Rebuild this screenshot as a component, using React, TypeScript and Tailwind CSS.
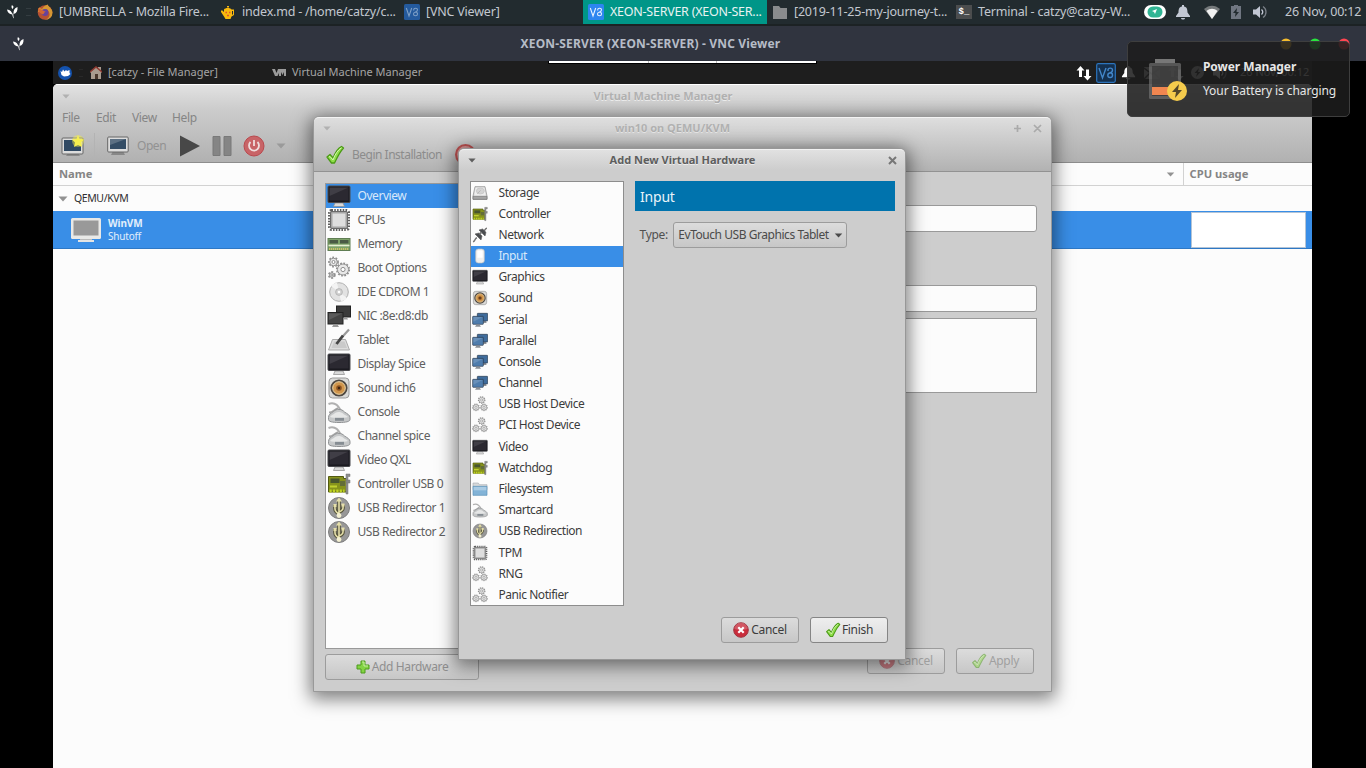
import React from "react";

type IconProps = { name: string; size: number };

function Monitor({ fill }: { fill: string }) {
  return (
    <g>
      <path d="M8 19h8l1.5 3.5h-11z" fill="#d9d9d9" stroke="#8b8b8b" strokeWidth=".7" />
      <rect x="1" y="2" width="22" height="16.5" rx="1" fill="#1b1a20" stroke="#4a4a4e" />
      <rect x="2.5" y="3.5" width="19" height="13" fill={fill} />
      <path d="M2.5 3.5h19L2.5 12z" fill="#fff" opacity=".1" />
    </g>
  );
}

function Gear({ cx, cy, r }: { cx: number; cy: number; r: number }) {
  return (
    <g fill="none">
      <circle cx={cx} cy={cy} r={r} stroke="#8e8e8e" strokeWidth="2.2" strokeDasharray="1.7 1.4" />
      <circle cx={cx} cy={cy} r={r - 0.5} fill="#e8e8e8" stroke="#949494" strokeWidth="1" />
      <circle cx={cx} cy={cy} r={r * 0.35} fill="#fff" stroke="#8f8f8f" strokeWidth="1" />
    </g>
  );
}

function DeviceIcon({ name, size }: IconProps) {
  const art: Record<string, React.ReactNode> = {
    monitor: <Monitor fill="#2b2931" />,
    cpu: (
      <g>
        <rect x="2.5" y="2.5" width="19" height="19" rx="2" fill="none" stroke="#5e5e5e" strokeWidth="3" strokeDasharray="1.5 1.3" />
        <rect x="3.5" y="3.5" width="17" height="17" rx="1.5" fill="#a5a5a5" stroke="#6a6a6a" />
        <rect x="5.500" y="5.500" width="13" height="13" fill="#dedede" />
      </g>
    ),
    memory: (
      <g>
        <rect x="1" y="6.500" width="22" height="12" fill="#7da269" stroke="#5f7d53" />
        <rect x="2.500" y="8" width="8.500" height="3.500" fill="#4a5a45" />
        <rect x="13" y="8" width="8.500" height="3.500" fill="#4a5a45" />
        <path d="M1.500 13.500h21" stroke="#e6eed2" strokeWidth="1.600" />
        <path d="M2 17h20" stroke="#c9c168" strokeWidth="2" strokeDasharray="1.200 .8" />
      </g>
    ),
    boot: (
      <g>
        <Gear cx={6.5} cy={6} r={4.3} />
        <Gear cx={16} cy={13.5} r={6} />
        <Gear cx={4.8} cy={19} r={2.8} />
      </g>
    ),
    gears: (
      <g>
        <Gear cx={14.5} cy={6} r={4.6} />
        <Gear cx={6} cy={17} r={4.6} />
        <Gear cx={18} cy={17} r={4.6} />
      </g>
    ),
    disc: (
      <g>
        <circle cx="12" cy="12" r="9.300" fill="#e2e2e2" stroke="#b0b0b0" />
        <path d="M12 12L4 6a10 10 0 0 1 6-3.600zM12 12l8 6a10 10 0 0 1-6 3.600z" fill="#f3f3f3" />
        <circle cx="12" cy="12" r="3.400" fill="#d0d0d0" stroke="#aaa" strokeWidth=".7" />
        <circle cx="12" cy="12" r="1.300" fill="#fff" />
      </g>
    ),
    nic: (
      <g>
        <rect x="9.500" y="2" width="14" height="11" fill="#3a3a3a" stroke="#222" />
        <path d="M17 15.500h4l-1-2h-3z" fill="#999" />
        <rect x="1" y="8.500" width="15" height="11.500" fill="#444" stroke="#222" />
        <path d="M2 9.500h13L2 16z" fill="#fff" opacity=".12" />
        <path d="M5 23h7l-1.500-2.500h-4z" fill="#999" />
      </g>
    ),
    netblue: (
      <g>
        <path d="M16 16.500h6l-1.500-3h-3z" fill="#8b9096" />
        <rect x="8" y="2" width="15.500" height="11.500" rx=".7" fill="#3f6c9c" stroke="#27384b" />
        <rect x="1" y="6.500" width="16" height="12" rx=".7" fill="#4f7dad" stroke="#27384b" />
        <path d="M2 7.500h14L2 14.500z" fill="#fff" opacity=".15" />
        <path d="M4.500 22h9l-2-3h-5z" fill="#8b9096" />
      </g>
    ),
    tablet: (
      <g>
        <path d="M5.500 11.500h13l4 10.500h-21z" fill="#ddd" stroke="#ababab" />
        <path d="M7 13.500h10.500l2.500 6.500H4.500z" fill="#cacaca" />
        <path d="M22 1.500L12 12.500" stroke="#9a9a9a" strokeWidth="2.200" />
        <path d="M16 7.500L9.500 16" stroke="#444" strokeWidth="2.800" />
      </g>
    ),
    speaker: (
      <g>
        <rect x="2" y="2" width="20" height="20" rx="3.500" fill="#d9d9d7" stroke="#999" />
        <circle cx="12" cy="12" r="8.600" fill="#4e4740" />
        <circle cx="12" cy="12" r="6.300" fill="#d0954b" stroke="#efd7a8" />
        <circle cx="12" cy="12" r="2.800" fill="#8c5221" />
        <circle cx="12" cy="12" r="1.200" fill="#3b2311" />
      </g>
    ),
    serial: (
      <g fill="none">
        <path d="M1.500 4c5-2 9 0 12 6" stroke="#b0b0b0" strokeWidth="2" />
        <path d="M2 12.500c4 0 5-3 9-4.500" stroke="#a6a6a6" strokeWidth="1.800" />
        <path d="M1.500 17.500c0-3 2-4 5-6 3-3 8-3 11 .5 3 2 5.500 3 5.500 5.500v2c0 2-4 3-11 3s-10.500-1-10.500-3z" fill="#c6c8c9" stroke="#8f9193" />
        <path d="M3 17c1-2 4-2.500 5-4 3-1.500 6-1 8 .5 1 1.500 4 2 5 3.500-4 1.500-14 1.500-18 0z" fill="#e6e7e7" />
        <path d="M8 17.800h9v3H8z" fill="#868d93" />
      </g>
    ),
    card: (
      <g>
        <path d="M1.500 4.500h15v2h3v13.500h-18z" fill="#87931c" stroke="#525a12" />
        <rect x="3.500" y="6.500" width="9" height="4.500" fill="#48552e" />
        <rect x="13" y="9" width="5" height="5" fill="#636d38" />
        <path d="M3 14.500h7" stroke="#c0d02f" strokeWidth="2" />
        <path d="M2.500 19h15" stroke="#bfd322" strokeWidth="3" strokeDasharray="2.200 1.200" />
        <path d="M19 2h4v2.500h-2V22h-2zM19 8h4v3h-4z" fill="#8e8e8e" stroke="#777" strokeWidth=".5" />
      </g>
    ),
    usb: (
      <g fill="none">
        <circle cx="12" cy="12" r="10.500" fill="#979797" stroke="#7d7d7d" />
        <path d="M12 21V4M12 18c-5-3-4-5-4-9M12 16c5-2 4-4 4-7" stroke="#55533b" strokeWidth="3.600" />
        <path d="M12 21V4M12 18c-5-3-4-5-4-9M12 16c5-2 4-4 4-7" stroke="#e5dfaa" strokeWidth="1.600" />
        <circle cx="12" cy="19.500" r="2.400" fill="#f4f0d1" />
        <path d="M9 5.500l3-4 3 4z" fill="#e5dfaa" />
        <path d="M6.500 8h3v3h-3zM14.500 7.500h3v3h-3z" fill="#e5dfaa" />
      </g>
    ),
    storage: (
      <g>
        <path d="M4.500 2.500h15l3 14v5h-21v-5z" fill="#dcdcdc" stroke="#858585" />
        <path d="M5.500 4h13l2 12h-17z" fill="#eee" />
        <ellipse cx="12.500" cy="9" rx="6" ry="4.500" fill="#d4d4d4" stroke="#c1c1c1" />
        <path d="M1.500 17h21v4.500h-21z" fill="#a5a5a5" stroke="#777" />
        <path d="M8 13l5-5" stroke="#aaa" />
      </g>
    ),
    plug: (
      <g fill="none">
        <path d="M1.500 22c4-.5 2-5 6-6M22.500 2c-3.500 0-2 3.500-6 5" stroke="#777" strokeWidth="2.200" />
        <path d="M4.500 10.500l9 9 1.500-6-4.500-4.500zM10.500 4.500l9 9 1.500-5.500-5-5z" fill="#4a4c4f" stroke="#5f5f5f" />
        <path d="M11 11l3-3" stroke="#777" strokeWidth="3" />
      </g>
    ),
    mouse: (
      <g>
        <rect x="5.500" y="1.500" width="13" height="21" rx="4" fill="#f0f0ee" stroke="#bdbdbd" />
        <path d="M8 4.500c2-1 6-1 8 0v10H8z" fill="#fff" />
      </g>
    ),
    folder: (
      <g>
        <path d="M1.500 3h8l1.500 2.500h11.500V13h-21z" fill="#d7d9da" stroke="#aab1b5" />
        <path d="M1.500 8h21v13.500h-21z" fill="#82b3d7" stroke="#5b93b8" />
        <path d="M2.500 9h19v5h-19z" fill="#a9cbe4" />
      </g>
    ),
  };
  return (
    <svg width={size} height={size} viewBox="0 0 24 24" className="shrink-0">
      {art[name]}
    </svg>
  );
}

const Check = ({ size, faded = false }: { size: number; faded?: boolean }) => (
  <svg width={size} height={size} viewBox="0 0 20 20" className={faded ? "shrink-0 opacity-50" : "shrink-0"}>
    <path d="M2 12l3-2.500 3 3.500C10 8 13 3 16.500 1.500l2 1.500C14 8 12 13 9.500 18H6.500z" fill="#8fdf4a" stroke="#4b9a16" strokeWidth="1.300" strokeLinejoin="round" />
    <path d="M4 12l1-.5 3 3.500C10 9 13 5 16.500 2.800" fill="none" stroke="#d5f7b2" strokeWidth="1" />
  </svg>
);

const CancelIcon = ({ faded = false }: { faded?: boolean }) => (
  <svg width="16" height="16" viewBox="0 0 16 16" className={faded ? "shrink-0 opacity-50" : "shrink-0"}>
    <circle cx="8" cy="8" r="7.300" fill="#c92d3c" stroke="#a03440" />
    <path d="M1.500 7a6.500 6.500 0 0 1 13 0c-4 1.500-9 1.500-13 0z" fill="#fff" opacity=".2" />
    <path d="M5.300 5.300l5.400 5.400M10.700 5.300l-5.400 5.400" stroke="#fff" strokeWidth="2.200" />
  </svg>
);

const Vnc = ({ dim = false }: { dim?: boolean }) => (
  <svg width="16" height="16" viewBox="0 0 16 16" className="shrink-0">
    <rect width="16" height="16" rx="1.500" fill={dim ? "#245a9d" : "#2d86f0"} />
    <path d="M2.300 4l2.700 8 2.700-8M9.700 6.500V5.800c0-2 3.800-2 3.800 0 0 1.500-1 2-2 2.200-1.300.3-2 1-2 2 0 2.300 4 2.300 4 0 0-1.200-.8-2-2-2" fill="none" stroke={dim ? "#7d9fc6" : "#e6f1ff"} strokeWidth="1.100" />
  </svg>
);

const Bird = () => (
  <svg width="11" height="14" viewBox="0 0 11 14" className="shrink-0">
    <path d="M0 4.500c3 .3 5 1.800 5.300 5C2.300 9 .5 7.500 0 4.500zM10.500 2c.3 4-1 6.500-4 7-.2-3.500 1-6 4-7z" fill="#fff" />
    <path d="M5 0l1.600 1.800L5.800 4C4.300 3 4.200 1.500 5 0zM5.300 8.500h1c0 2 .2 3.500.7 5C5.800 12.500 5.300 11 5.300 8.500z" fill="#fff" />
  </svg>
);

const Caret = ({ className }: { className: string }) => (
  <svg width="10" height="6" viewBox="0 0 10 6" className={className}>
    <path d="M.5.5h9L5 5.500z" fill="currentColor" />
  </svg>
);

const Bell = ({ size }: { size: number }) => (
  <svg width={size} height={size} viewBox="0 0 16 16" className="shrink-0" fill="currentColor">
    <path d="M7 1h2v1.500c3 .6 3.500 3 3.500 6L15 12v1H1v-1l2.500-3.500c0-3 .5-5.400 3.500-6zM6 14h4c0 2-4 2-4 0z" />
  </svg>
);

const Arrows = () => (
  <svg width="16" height="16" viewBox="0 0 16 16" className="shrink-0" fill="currentColor">
    <path d="M4.500 1L8.500 5.500H6V12H3V5.500H.5zM11.500 15.500L7.500 11H10V4.500h3V11h2.500z" />
  </svg>
);

const Speaker = () => (
  <svg width="16" height="16" viewBox="0 0 16 16" className="shrink-0">
    <path d="M1 5.500h3L8 2v12L4 10.500H1z" fill="currentColor" />
    <path d="M9.500 5.500c1.500 1.500 1.500 3.500 0 5" fill="none" stroke="currentColor" strokeWidth="1.300" />
    <path d="M11 2.500c4 2.500 4 8.500 0 11" fill="none" stroke="#7b8189" strokeWidth="1.300" />
  </svg>
);

const hardware: [string, string][] = [
  ["Overview", "monitor"], ["CPUs", "cpu"], ["Memory", "memory"], ["Boot Options", "boot"],
  ["IDE CDROM 1", "disc"], ["NIC :8e:d8:db", "nic"], ["Tablet", "tablet"], ["Display Spice", "monitor"],
  ["Sound ich6", "speaker"], ["Console", "serial"], ["Channel spice", "serial"], ["Video QXL", "monitor"],
  ["Controller USB 0", "card"], ["USB Redirector 1", "usb"], ["USB Redirector 2", "usb"],
];

const newHardware: [string, string][] = [
  ["Storage", "storage"], ["Controller", "card"], ["Network", "plug"], ["Input", "mouse"],
  ["Graphics", "monitor"], ["Sound", "speaker"], ["Serial", "netblue"], ["Parallel", "netblue"],
  ["Console", "netblue"], ["Channel", "netblue"], ["USB Host Device", "gears"], ["PCI Host Device", "gears"],
  ["Video", "monitor"], ["Watchdog", "card"], ["Filesystem", "folder"], ["Smartcard", "serial"],
  ["USB Redirection", "usb"], ["TPM", "cpu"], ["RNG", "gears"], ["Panic Notifier", "gears"],
];

function TopPanel() {
  return (
    <header className="flex h-[26px] items-center border-b-2 border-[#1c2224] bg-[#222b2f] text-[12.500px] leading-6 tracking-[-0.200px] text-[#c3c8cf]">
      <div className="flex w-[37px] shrink-0 items-center pl-[7px]">
        <Bird />
        <span className="ml-[8px] h-[8px] w-[5px] border-y border-[#343d41]" />
      </div>
      <div className="flex w-[184px] shrink-0 items-center gap-[6px]">
        <svg width="16" height="16" viewBox="0 0 16 16" className="shrink-0">
          <circle cx="8" cy="8.500" r="7.300" fill="#b65132" />
          <path d="M2 3.500L5 5c2-3 4-4 6-4.500-.5 2 4 3 4.500 8A7.300 7.300 0 0 1 8 16C15 13 13 7 9 5L7 8 1 8z" fill="#d59733" />
          <circle cx="8" cy="8.500" r="3.400" fill="#67439b" />
          <path d="M1 4l4 2 4 2c-3 0-1 3-4 2S1 7 1 4z" fill="#d36633" />
        </svg>
        <span className="whitespace-nowrap">[UMBRELLA - Mozilla Fire...</span>
      </div>
      <div className="flex w-[183px] shrink-0 items-center gap-[8px]">
        <svg width="13" height="13" viewBox="0 0 13 13" className="shrink-0">
          <path d="M6 0h2v1.500h-2z" fill="#f5b913" />
          <path d="M3 3.500C4 1.500 9.500 1.500 10.500 3.500H13V9l-2.500 1.500-1 2.500h-5L3 10.500 0 6V4.500h1.500L3 6z" fill="#f9b90d" />
          <path d="M11 5h1v3.500h-1z" fill="#222b2f" />
          <path d="M4.500 6.500H6M8 6.500h1.500M6 9.500h2" stroke="#df5330" strokeWidth="1.300" />
        </svg>
        <span className="whitespace-nowrap">index.md - /home/catzy/c...</span>
      </div>
      <div className="flex w-[179px] shrink-0 items-center gap-[6px]"><Vnc dim /><span>[VNC Viewer]</span></div>
      <div className="flex h-6 w-[184px] shrink-0 items-center gap-[6px] bg-[#009688] pl-[5px] text-[#e9f3f2]">
        <Vnc /><span className="whitespace-nowrap tracking-[-0.250px]">XEON-SERVER (XEON-SER...</span>
      </div>
      <div className="flex w-[189px] shrink-0 items-center gap-[7px] pl-[6px]">
        <svg width="14" height="13" viewBox="0 0 14 13" className="shrink-0"><path d="M0 0h6l1.500 2H14v11H0z" fill="#898b8d" /></svg>
        <span className="whitespace-nowrap">[2019-11-25-my-journey-t...</span>
      </div>
      <div className="flex w-[188px] shrink-0 items-center gap-[6px]">
        <span className="flex h-[14px] w-4 shrink-0 items-center justify-center bg-[#4b4d4e] font-mono text-[9px] font-bold tracking-normal text-white">$_</span>
        <span className="whitespace-nowrap">Terminal - catzy@catzy-W...</span>
      </div>
      <div className="flex w-[141px] shrink-0 items-center text-[#c3c8d4]">
        <svg width="22" height="14" viewBox="0 0 22 14" className="mr-[9px]">
          <rect width="22" height="14" rx="7" fill="#fff" />
          <rect x="3.500" y="1.500" width="15" height="11" rx="5.500" fill="#30b594" />
          <path d="M8 6l5-2-2 5-1-2z" fill="#fff" />
        </svg>
        <Bell size={16} />
        <svg width="16" height="14" viewBox="0 0 16 14" className="ml-[13px]">
          <path d="M0 4C5-.5 11-.5 16 4L8 14z" fill="#767a7c" />
          <path d="M2.500 6c3.500-3 7.500-3 11 0L8 14z" fill="#f1f1f1" />
        </svg>
        <svg width="10" height="14" viewBox="0 0 10 14" className="ml-[11px]">
          <path d="M3 0h4v1h3v13H0V1h3z" fill="#707681" /><path d="M6 3L2 8h2.500L4 12l4-5H5.500z" fill="#222b2f" />
        </svg>
        <span className="ml-[11px]"><Speaker /></span>
      </div>
      <span className="whitespace-nowrap">26 Nov, 00:12</span>
    </header>
  );
}

function RemotePanel() {
  return (
    <div className="flex h-[23px] items-center bg-[#1e1e1e] text-[11px] text-[#a5a5a5]">
      <div className="flex w-[36px] items-center pl-[5px]">
        <svg width="14" height="14" viewBox="0 0 14 14"><circle cx="7" cy="7" r="7" fill="#1452ad" /><path d="M2.500 5l1.500 1 1-2.500 1.500 2L8 4l1 1 2.500-1v3l1 1-2.500 2-4 .5L3.500 9z" fill="#fff" /></svg>
        <span className="ml-[7px] h-2 w-[4px] border-y border-[#292929]" />
      </div>
      <svg width="12" height="13" viewBox="0 0 12 13" className="ml-px"><path d="M0 6l6-5 2 1.500V1h3v4l1 1-1 1v6H1V7z" fill="#a99b8e" /><path d="M0 6l6-5 6 5" fill="none" stroke="#8f3930" strokeWidth="1.500" /><path d="M5 8h3v5H5z" fill="#49372c" /></svg>
      <span className="ml-[6px] w-[164px] whitespace-nowrap">[catzy - File Manager]</span>
      <svg width="14" height="7" viewBox="0 0 14 7"><path d="M0 0h3l1.500 4L6 0h8v7h-2V3l-1.500 3L9 3v4H7V4L5.500 7H3z" fill="#9b9b9b" /></svg>
      <span className="ml-[6px] w-[784px] shrink-0 whitespace-nowrap">Virtual Machine Manager</span>
      <div className="flex items-center text-white">
        <Arrows />
        <svg width="20" height="20" viewBox="0 0 20 20" className="ml-[4px] shrink-0"><rect x=".7" y=".7" width="18.600" height="18.600" rx="1.500" fill="#14304f" stroke="#2c74bd" strokeWidth="1.200" /><path d="M3 5l3.500 10L10 5M12 8V7c0-2.500 4.500-2.500 4.500 0 0 1.800-1 2.500-2.200 2.700-1.500.3-2.500 1-2.500 2.500 0 3 4.700 3 4.700 0 0-1.500-1-2.500-2.200-2.500" fill="none" stroke="#4386c9" strokeWidth="1.400" /></svg>
        <span className="ml-[5px]"><Bell size={15} /></span>
        <svg width="16" height="12" viewBox="0 0 16 12" className="ml-2 shrink-0"><path d="M0 0h16v12H0z" fill="#bbb" /><path d="M0 1l8 6 8-6M0 12l6-6M16 12l-6-6" fill="none" stroke="#222" strokeWidth="1.500" /></svg>
        <span className="ml-2"><Arrows /></span>
        <svg width="13" height="13" viewBox="0 0 13 13" className="ml-[7px] shrink-0"><circle cx="6.500" cy="6.500" r="6.500" fill="#bbb" /><path d="M8 2L3.500 7H6l-1 4 4.500-5H7z" fill="#222" /></svg>
        <span className="ml-2"><Speaker /></span>
        <span className="ml-[12px] whitespace-nowrap text-[11px] text-[#ccc]">26 Nov, 00:12</span>
      </div>
    </div>
  );
}

function ManagerWindow() {
  return (
    <section className="flex h-[684px] flex-col overflow-hidden rounded-t-[5px] bg-[#fcfcfc]">
      <div className="flex h-[79px] shrink-0 flex-col border-t border-b border-t-white border-b-[#8d8d8d] bg-linear-to-b from-[#e2e2e2] via-[#cdcdcd] via-30% to-[#b1b1b1] text-[#858585]">
        <div className="flex h-[23px] shrink-0 items-center pl-[9px] text-[#b1b1b1]">
          <Caret className="h-[5px] w-[8px]" />
          <b className="w-[1186px] text-center text-[11px] [text-shadow:0_1px_0_#eee]">Virtual Machine Manager</b>
        </div>
        <nav className="flex h-[19px] shrink-0 items-center pl-[9px] text-[12px] tracking-[-0.350px]">
          <span className="w-[34px]">File</span><span className="w-[36px]">Edit</span><span className="w-[40px]">View</span><span>Help</span>
        </nav>
        <div className="flex h-[36px] shrink-0 items-center pt-px pl-[8px]">
          <svg width="24" height="22" viewBox="0 0 24 22"><path d="M7 18h10l2 3H5z" fill="#898989" /><rect x="1" y="3" width="21" height="16" rx="1" fill="#dcdcdc" stroke="#666" /><rect x="3" y="5" width="17" height="11" fill="#304963" /><circle cx="17" cy="6" r="6" fill="#f3ee4a" opacity=".45" /><path d="M17 0l1.500 4 4.500.5-3 3 1 4.500-4-2-4 2 1-4.500-3-3 4.500-.5z" fill="#f6ef4f" /></svg>
          <span className="ml-[9px] h-[26px] w-px bg-[#b3b3b3]" />
          <svg width="22" height="20" viewBox="0 0 22 20" className="ml-[12px]"><path d="M6 15h10l2 4H4z" fill="#888" /><rect x=".7" y="1" width="20.500" height="15" rx="1" fill="#ddd" stroke="#666" /><rect x="3" y="3" width="16" height="10" fill="#344d65" /><path d="M3 3h16L3 9z" fill="#fff" opacity=".2" /></svg>
          <span className="ml-[8px] w-[43px] text-[12px] tracking-[-0.450px] text-[#929292]">Open</span>
          <svg width="20" height="22" viewBox="0 0 20 22"><path d="M0 .5L20 11 0 21.500z" fill="#484848" /></svg>
          <svg width="20" height="20" viewBox="0 0 20 20" className="ml-[12px]"><path d="M1 .5h7v19H1zM12 .5h7v19h-7z" fill="#858585" stroke="#797979" /></svg>
          <svg width="22" height="22" viewBox="0 0 22 22" className="ml-[11px]"><circle cx="11" cy="11" r="10" fill="#c86467" stroke="#b9494e" /><path d="M7.500 7a5 5 0 1 0 7 0M11 5v6" fill="none" stroke="#efdddd" strokeWidth="1.800" /></svg>
          <Caret className="ml-[11px] text-[#9a9a9a]" />
        </div>
      </div>
      <div className="flex h-[23px] shrink-0 items-center border-b border-[#d2d2d2] text-[11.200px] font-bold text-[#858585]">
        <span className="w-[1113px] pl-[6px]">Name</span>
        <Caret className="h-[5px] w-[9px] text-[#929292]" />
        <span className="ml-[8px] flex h-full items-center border-l border-[#d2d2d2] pl-[5.500px]">CPU usage</span>
      </div>
      <div className="flex h-[25px] shrink-0 items-center pl-[5px] text-[10.500px] tracking-[-0.400px] text-[#303030]">
        <Caret className="mr-[6px] text-[#929292]" />QEMU/KVM
      </div>
      <div className="flex h-[38px] shrink-0 items-center border-b border-[#2e78c5] bg-[#398ee7] pl-[17px] text-[#e2eefb]">
        <svg width="32" height="28" viewBox="0 0 32 28"><path d="M10 22h12v3H10z" fill="#bbb" /><rect x="1" y="2" width="30" height="21" rx="1.500" fill="#e9e9e7" /><rect x="3.500" y="4.500" width="25" height="15" fill="#999" /><path d="M8 24h16v2H8z" fill="#e4e4e4" /></svg>
        <div className="ml-[6px] w-[1083px] text-[10px] leading-[13px] tracking-[-0.200px]"><b className="block tracking-[-0.100px]">WinVM</b><div>Shutoff</div></div>
        <div className="h-9 w-[115px] border border-[#b3c4d6] bg-white" />
      </div>
    </section>
  );
}

const buttonClass = "flex h-[26px] items-center justify-center rounded-[3px] border border-[#9c9c9c] bg-linear-to-b from-[#dcdcdc] to-[#c7c7c7] text-[12px]";

function DetailsWindow() {
  return (
    <section className="absolute left-[313px] top-[116px] flex h-[576px] w-[739px] flex-col rounded-t-[6px] border border-[#999] bg-[#cdcdcd] tracking-[-0.450px] text-[#858585] shadow-[0_4px_18px_3px_rgba(0,0,0,0.5)]">
      <div className="flex h-[55px] shrink-0 flex-col rounded-t-[5px] border-t border-b border-t-[#f4f4f4] border-b-[#929292] bg-linear-to-b from-[#dedede] to-[#b2b2b2]">
        <div className="flex h-[21px] shrink-0 items-center pl-[9px] text-[#b1b1b1]">
          <Caret className="h-[5px] w-[8px]" />
          <b className="w-[683px] text-center text-[11px] tracking-normal [text-shadow:0_1px_0_#e9e9e9]">win10 on QEMU/KVM</b>
          <svg width="29" height="9" viewBox="0 0 29 9" fill="none" stroke="#aaa" strokeWidth="1.700"><path d="M3.500 1v7M0 4.500h7M20 1l7 7M27 1l-7 7" /></svg>
        </div>
        <div className="flex h-[31px] shrink-0 items-center pl-[11px] text-[12px] tracking-[-0.500px] text-[#8c8c8c]">
          <Check size={20} /><span className="ml-[7px] w-[103px] whitespace-nowrap">Begin Installation</span>
          <span className="h-[21px] w-[21px] rounded-full border-2 border-[#c15353] bg-[#db9a9a]" />
        </div>
      </div>
      <div className="flex grow pt-[11px] pl-[11px]">
        <div className="flex w-[154px] flex-col">
          <div className="h-[466px] border border-[#999] bg-[#fcfcfc] text-[12px] text-[#606060]">
            {hardware.map(([label, icon], i) => (
              <div key={i} className={i === 0 ? "flex h-[23.970px] items-center bg-[#398ee7] pl-[1px] text-[#d8e8fa]" : "flex h-[23.970px] items-center pl-[1px]"}>
                <DeviceIcon name={icon} size={24} /><span className="ml-[6.500px] whitespace-nowrap">{label}</span>
              </div>
            ))}
          </div>
          <div className={`${buttonClass} mt-[5px] tracking-[-0.350px] text-[#8f8f8f]`}>
            <svg width="14" height="14" viewBox="0 0 14 14" className="mr-[2px]"><path d="M5 1h4v4h4v4H9v4H5V9H1V5h4z" fill="#83d344" stroke="#4c9b1d" /><path d="M6 2h2v4h4" fill="none" stroke="#c5ee9f" /></svg>Add Hardware
          </div>
        </div>
        <div className="flex grow flex-col pr-[14px] pl-[10px]">
          <div className="mt-[22px] h-[27px] rounded-[3px] border border-[#999] bg-[#fcfcfc]" />
          <div className="mt-[53px] h-[27px] rounded-[3px] border border-[#999] bg-[#fcfcfc]" />
          <div className="mt-[6px] h-[75px] border border-[#999] bg-[#fcfcfc]" />
          <div className="mt-[255px] mr-[3px] flex justify-end gap-[11px] tracking-[-0.300px] text-[#a0a0a0]">
            <div className={`${buttonClass} w-[78px] gap-[2px]`}><CancelIcon faded />Cancel</div>
            <div className={`${buttonClass} w-[78px] gap-[2px]`}><Check size={16} faded />Apply</div>
          </div>
        </div>
      </div>
    </section>
  );
}

function AddHardwareDialog() {
  return (
    <section className="absolute left-[458px] top-[148px] flex h-[512px] w-[448px] flex-col rounded-t-[6px] border border-[#979797] bg-[#cdcdcd] text-[12px] tracking-[-0.450px] text-[#3c3c3c] shadow-[0_3px_18px_3px_rgba(0,0,0,0.5)]">
      <div className="flex h-[21px] shrink-0 items-center rounded-t-[5px] border-t border-[#f1f1f1] bg-linear-to-b from-[#e1e1e1] to-[#cdcdcd] pl-[9px] text-[#5e5e5e]">
        <Caret className="h-[5px] w-[8px]" />
        <b className="w-[412px] pl-[1px] text-center text-[11px] tracking-normal [text-shadow:0_1px_0_#eee]">Add New Virtual Hardware</b>
        <svg width="10" height="9" viewBox="0 0 10 9"><path d="M1 1l7 7M8 1L1 8" stroke="#777" strokeWidth="2" /></svg>
      </div>
      <div className="mt-[11px] flex pl-[11px]">
        <div className="h-[425px] w-[154px] border border-[#8d8d8d] bg-[#fcfcfc]">
          {newHardware.map(([label, icon], i) => (
            <div key={i} className={label === "Input" ? "flex h-[21.180px] items-center bg-[#398ee7] pl-[1px] text-[#d8e8fa]" : "flex h-[21.180px] items-center pl-[1px]"}>
              <DeviceIcon name={icon} size={16} /><span className="ml-[10.500px] whitespace-nowrap">{label}</span>
            </div>
          ))}
        </div>
        <div className="ml-[10.500px] w-[260px]">
          <div className="flex h-[30px] items-center bg-[#0073ad] pl-[5.500px] text-[14px] tracking-[-0.200px] text-[#e8f3f9]">Input</div>
          <div className="mt-[11px] flex items-center">
            <span className="w-[38.500px] shrink-0 pl-[5px] tracking-[-0.300px] text-[#505050]">Type:</span>
            <div className={`${buttonClass} w-[174px] pl-[1px] text-[#4a4a4a]`}>
              <span className="mr-[5px] whitespace-nowrap">EvTouch USB Graphics Tablet</span><Caret className="h-[5px] w-[9px] shrink-0" />
            </div>
          </div>
        </div>
      </div>
      <div className="mt-[11px] flex justify-end gap-[11px] pr-[17px] tracking-[-0.300px]">
        <div className={`${buttonClass} w-[78px]`}><CancelIcon /><span className="ml-[2px]">Cancel</span></div>
        <div className={`${buttonClass} w-[78px] border-[#858585] from-[#eee] to-[#dcdcdc]`}><Check size={16} /><span className="ml-px">Finish</span></div>
      </div>
    </section>
  );
}

function Notification() {
  return (
    <aside className="absolute left-[1127px] top-[41px] flex h-[76px] w-[223px] rounded-[5px] border border-[#3e3e3e] bg-[#1d1d1d]/87 text-[12px] tracking-[-0.080px] text-[#e6e6e6]">
      <svg width="39" height="44" viewBox="0 0 39 44" className="mt-[16px] ml-[20px] shrink-0">
        <path d="M7 1h20v4H7z" fill="#777" /><rect x="1" y="5" width="32" height="36" rx="1.500" fill="#777" opacity=".65" />
        <rect x="4" y="8" width="26" height="30" fill="#343434" opacity=".7" /><path d="M4 29h20v8H4z" fill="#f08650" />
        <circle cx="29" cy="33" r="10" fill="#f5cb4c" /><path d="M31 26l-7 8h4l-1 6 7-8h-4z" fill="#544729" />
      </svg>
      <div className="ml-[16px] pt-[13px] whitespace-nowrap"><b className="block leading-6">Power Manager</b><span className="block leading-6">Your Battery is charging</span></div>
    </aside>
  );
}

export default function App() {
  return (
    <main className="relative flex h-[768px] w-[1366px] flex-col overflow-hidden bg-black font-['Noto_Sans',sans-serif] leading-normal">
      <TopPanel />
      <div className="flex h-[35px] shrink-0 items-center bg-[#30343f] text-[#b6bcc7]">
        <div className="w-[120px] pl-[13px]"><Bird /></div>
        <b className="w-[1061px] text-center text-[12px] tracking-[0.160px]">XEON-SERVER (XEON-SERVER) - VNC Viewer</b>
        <svg width="75" height="12" viewBox="0 0 75 12" className="ml-[98px]"><circle cx="7" cy="6" r="5.500" fill="#f5bc2e" /><circle cx="36" cy="6" r="5.500" fill="#28e43e" /><circle cx="65" cy="6" r="5.500" fill="#ff4551" /></svg>
      </div>
      <div className="ml-[53px] w-[1259px]"><RemotePanel /><ManagerWindow /></div>
      <div className="absolute top-[61px] left-[548px] flex h-[3px] w-[269px] border-x border-b border-black bg-white"><span className="w-[100px] border-r border-[#bbb]" /><span className="w-[68px] border-r border-[#bbb]" /></div>
      <DetailsWindow />
      <AddHardwareDialog />
      <Notification />
    </main>
  );
}
